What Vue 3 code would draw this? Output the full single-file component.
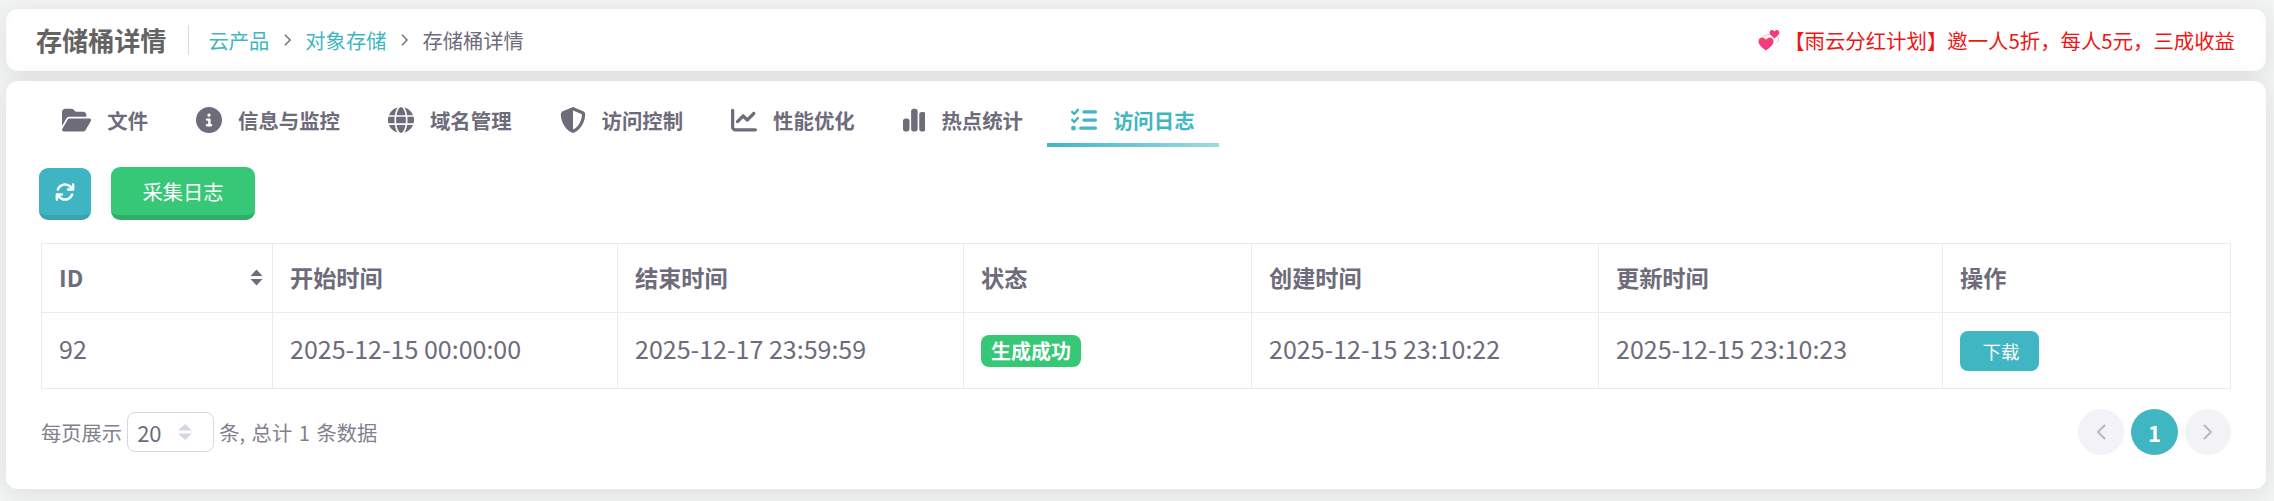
<template>
  <div class="page">
    <header class="topbar">
      <div class="topbar-left">
        <h1 class="page-title">存储桶详情</h1>
        <nav class="crumbs">
          <a class="crumb-link">云产品</a>
          <svg class="crumb-sep" viewBox="0 0 10 16"><path d="M2 2l6 6-6 6" /></svg>
          <a class="crumb-link">对象存储</a>
          <svg class="crumb-sep" viewBox="0 0 10 16"><path d="M2 2l6 6-6 6" /></svg>
          <span>存储桶详情</span>
        </nav>
      </div>
      <div class="promo">
        <svg class="promo-icon" viewBox="0 0 22 22">
          <defs>
            <linearGradient id="heartFill" x1="0" y1="0" x2="0" y2="1">
              <stop offset="0" stop-color="#f5435f" />
              <stop offset="1" stop-color="#f2359b" />
            </linearGradient>
          </defs>
          <path d="M4 8.5C7 5.5 13 4.5 17.5 6.5c4 2 4 5.5 1 7" fill="none" stroke="#f9a8c8" stroke-width="0.9" />
          <path d="M8 21.5C3.5 18 .5 15.5.5 12.4.5 10.1 2.2 8.6 4.2 8.6c1.6 0 3 .9 3.8 2.3.8-1.4 2.2-2.3 3.8-2.3 2 0 3.7 1.5 3.7 3.8 0 3.1-3 5.6-7.5 9.1z" fill="url(#heartFill)" />
          <path d="M16.5 9.5c-2.9-2.3-4.9-3.9-4.9-5.9 0-1.5 1.1-2.6 2.5-2.6 1 0 1.9.6 2.4 1.5.5-.9 1.4-1.5 2.4-1.5 1.4 0 2.5 1.1 2.5 2.6 0 2-2 3.6-4.9 5.9z" fill="url(#heartFill)" />
        </svg>
        <span>【雨云分红计划】邀一人5折，每人5元，三成收益</span>
      </div>
    </header>

    <main class="card">
      <div class="tabs">
        <div v-for="tab in tabs" :key="tab.label" class="tab" :class="{ active: tab.active }">
          <svg class="tab-icon" :style="{ width: tab.w * 26 / 512 + 'px' }" :viewBox="`0 0 ${tab.w} 512`">
            <path :d="tab.icon" />
          </svg>
          <span>{{ tab.label }}</span>
        </div>
      </div>

      <div class="actions">
        <button class="btn btn-refresh">
          <svg viewBox="0 0 512 512"><path d="M105.1 202.6c7.7-21.8 20.2-42.3 37.8-59.8c62.5-62.5 163.8-62.5 226.3 0L386.3 160H336c-17.7 0-32 14.3-32 32s14.3 32 32 32H463.5c0 0 0 0 0 0h.4c17.7 0 32-14.3 32-32V64c0-17.7-14.3-32-32-32s-32 14.3-32 32v51.2L414.4 97.6c-87.5-87.5-229.3-87.5-316.8 0C73.2 122 55.6 150.7 44.8 181.4c-5.9 16.7 2.9 34.9 19.5 40.8s34.9-2.9 40.8-19.5zM39 289.3c-5 1.5-9.8 4.2-13.7 8.2c-4 4-6.7 8.8-8.1 14c-.3 1.2-.6 2.5-.8 3.8c-.3 1.7-.4 3.4-.4 5.1V448c0 17.7 14.3 32 32 32s32-14.3 32-32V396.9l17.6 17.5 0 0c87.5 87.4 229.3 87.4 316.7 0c24.4-24.4 42.1-53.1 52.9-83.7c5.9-16.7-2.9-34.9-19.5-40.8s-34.9 2.9-40.8 19.5c-7.7 21.8-20.2 42.3-37.8 59.8c-62.5 62.5-163.8 62.5-226.3 0l-.1-.1L125.6 352H176c17.7 0 32-14.3 32-32s-14.3-32-32-32H48.4c-1.6 0-3.2 .1-4.8 .3s-3.1 .5-4.6 1z" /></svg>
        </button>
        <button class="btn btn-collect">采集日志</button>
      </div>

      <table class="log-table">
        <thead>
          <tr>
            <th class="col-id">
              <div class="th-sort">
                <span>ID</span>
                <svg viewBox="0 0 13 17"><path d="M6.5 0.5l6 6.5h-12zM.5 10h12l-6 6.5z" /></svg>
              </div>
            </th>
            <th class="col-start">开始时间</th>
            <th class="col-end">结束时间</th>
            <th class="col-status">状态</th>
            <th class="col-created">创建时间</th>
            <th class="col-updated">更新时间</th>
            <th class="col-op">操作</th>
          </tr>
        </thead>
        <tbody>
          <tr>
            <td>92</td>
            <td>2025-12-15 00:00:00</td>
            <td>2025-12-17 23:59:59</td>
            <td class="cell-box"><span class="tag-success">生成成功</span></td>
            <td>2025-12-15 23:10:22</td>
            <td>2025-12-15 23:10:23</td>
            <td class="cell-box"><button class="btn-download">下载</button></td>
          </tr>
        </tbody>
      </table>

      <div class="footer">
        <div class="page-size">
          <span>每页展示</span>
          <div class="size-select">
            <span>20</span>
            <svg viewBox="0 0 14 16"><path d="M7 0l7 6.5H0zM0 9.5h14L7 16z" /></svg>
          </div>
          <span class="total">条, 总计 1 条数据</span>
        </div>
        <div class="pager">
          <div class="pager-btn">
            <svg viewBox="0 0 12 18"><path d="M10 2L3 9l7 7" /></svg>
          </div>
          <div class="pager-btn current">1</div>
          <div class="pager-btn">
            <svg viewBox="0 0 12 18"><path d="M2 2l7 7-7 7" /></svg>
          </div>
        </div>
      </div>
    </main>
  </div>
</template>

<script setup>
// tab icons, w = viewBox width
const tabs = [
  {
    label: '文件',
    w: 576,
    icon: 'M88.7 223.8L0 375.8V96C0 60.7 28.7 32 64 32H181.5c17 0 33.3 6.7 45.3 18.7l26.5 26.5c12 12 28.3 18.7 45.3 18.7H416c35.3 0 64 28.7 64 64v32H144c-22.8 0-43.8 12.1-55.3 31.8zm27.6 16.1C122.1 230 132.6 224 144 224H544c11.5 0 22 6.1 27.7 16.1s5.7 22.2-.1 32.1l-112 192C453.9 474 443.4 480 432 480H32c-11.5 0-22-6.1-27.7-16.1s-5.7-22.2 .1-32.1l112-192z'
  },
  {
    label: '信息与监控',
    w: 512,
    icon: 'M256 512A256 256 0 1 0 256 0a256 256 0 1 0 0 512zM216 336h24V272H216c-13.3 0-24-10.7-24-24s10.7-24 24-24h48c13.3 0 24 10.7 24 24v88h8c13.3 0 24 10.7 24 24s-10.7 24-24 24H216c-13.3 0-24-10.7-24-24s10.7-24 24-24zm40-208a32 32 0 1 1 0 64 32 32 0 1 1 0-64z'
  },
  {
    label: '域名管理',
    w: 512,
    icon: 'M352 256c0 22.2-1.2 43.6-3.3 64H163.3c-2.2-20.4-3.3-41.8-3.3-64s1.2-43.6 3.3-64H348.7c2.2 20.4 3.3 41.8 3.3 64zm28.8-64H503.9c5.3 20.5 8.1 41.9 8.1 64s-2.8 43.5-8.1 64H380.8c2.1-20.6 3.2-42 3.2-64s-1.1-43.4-3.2-64zm112.6-32H376.7c-10-63.9-29.8-117.4-55.3-151.6c78.3 20.7 142 77.5 171.9 151.6zm-149.1 0H167.7c6.1-36.4 15.5-68.6 27-94.7c10.5-23.6 22.2-40.7 33.5-51.5C239.4 3.2 248.7 0 256 0s16.6 3.2 27.8 13.8c11.3 10.8 23 27.9 33.5 51.5c11.6 26 20.9 58.2 27 94.7zm-209 0H18.6C48.6 85.9 112.2 29.1 190.6 8.4C165.1 42.6 145.3 96.1 135.3 160zM8.1 192H131.2c-2.1 20.6-3.2 42-3.2 64s1.1 43.4 3.2 64H8.1C2.8 299.5 0 278.1 0 256s2.8-43.5 8.1-64zM194.7 446.6c-11.6-26-20.9-58.2-27-94.6H344.3c-6.1 36.4-15.5 68.6-27 94.6c-10.5 23.6-22.2 40.7-33.5 51.5C272.6 508.8 263.3 512 256 512s-16.6-3.2-27.8-13.8c-11.3-10.8-23-27.9-33.5-51.5zM135.3 352c10 63.9 29.8 117.4 55.3 151.6C112.2 482.9 48.6 426.1 18.6 352H135.3zm358.1 0c-30 74.1-93.6 130.9-171.9 151.6c25.5-34.2 45.2-87.7 55.3-151.6H493.4z'
  },
  {
    label: '访问控制',
    w: 512,
    icon: 'M256 0c4.6 0 9.2 1 13.4 2.9L457.7 82.8c22 9.3 38.4 31 38.3 57.2c-.5 99.2-41.3 280.7-213.6 363.2c-16.7 8-36.1 8-52.8 0C57.3 420.7 16.5 239.2 16 140c-.1-26.2 16.3-47.9 38.3-57.2L242.7 2.9C246.8 1 251.4 0 256 0zm0 66.8V444.8C394 378 431.1 230.1 432 141.4L256 66.8l0 0z'
  },
  {
    label: '性能优化',
    w: 512,
    icon: 'M64 64c0-17.7-14.3-32-32-32S0 46.3 0 64V400c0 44.2 35.8 80 80 80H480c17.7 0 32-14.3 32-32s-14.3-32-32-32H80c-8.8 0-16-7.2-16-16V64zm406.6 86.6c12.5-12.5 12.5-32.8 0-45.3s-32.8-12.5-45.3 0L320 210.7l-57.4-57.4c-12.5-12.5-32.8-12.5-45.3 0l-112 112c-12.5 12.5-12.5 32.8 0 45.3s32.8 12.5 45.3 0L240 221.3l57.4 57.4c12.5 12.5 32.8 12.5 45.3 0l128-128z'
  },
  {
    label: '热点统计',
    w: 448,
    icon: 'M160 80c0-26.5 21.5-48 48-48h32c26.5 0 48 21.5 48 48V432c0 26.5-21.5 48-48 48H208c-26.5 0-48-21.5-48-48V80zM0 272c0-26.5 21.5-48 48-48H80c26.5 0 48 21.5 48 48V432c0 26.5-21.5 48-48 48H48c-26.5 0-48-21.5-48-48V272zM368 96h32c26.5 0 48 21.5 48 48V432c0 26.5-21.5 48-48 48H368c-26.5 0-48-21.5-48-48V144c0-26.5 21.5-48 48-48z'
  },
  {
    label: '访问日志',
    w: 512,
    active: true,
    icon: 'M152.1 38.2c9.9 8.9 10.7 24 1.8 33.9l-72 80c-4.4 4.9-10.6 7.8-17.2 7.9s-12.9-2.4-17.6-7L7 113C-2.3 103.6-2.3 88.4 7 79s24.6-9.4 33.9 0l22.1 22.1 55.1-61.2c8.9-9.9 24-10.7 33.9-1.8zm0 160c9.9 8.9 10.7 24 1.8 33.9l-72 80c-4.4 4.9-10.6 7.8-17.2 7.9s-12.9-2.4-17.6-7L7 273c-9.4-9.4-9.4-24.6 0-33.9s24.6-9.4 33.9 0l22.1 22.1 55.1-61.2c8.9-9.9 24-10.7 33.9-1.8zM224 96c0-17.7 14.3-32 32-32H480c17.7 0 32 14.3 32 32s-14.3 32-32 32H256c-17.7 0-32-14.3-32-32zm0 160c0-17.7 14.3-32 32-32H480c17.7 0 32 14.3 32 32s-14.3 32-32 32H256c-17.7 0-32-14.3-32-32zM160 416c0-17.7 14.3-32 32-32H480c17.7 0 32 14.3 32 32s-14.3 32-32 32H192c-17.7 0-32-14.3-32-32zM48 368a48 48 0 1 1 0 96 48 48 0 1 1 0-96z'
  }
]
</script>

<style>
html,
body {
  margin: 0;
  background: #f3f4f4;
}
</style>

<style scoped>
.page {
  box-sizing: border-box;
  height: 501px;
  padding: 9px 8px 0 6px;
  overflow: hidden;
  font-family: "Noto Sans CJK SC", "Noto Sans", sans-serif;
  color: #6e6b7b;
}

.topbar {
  height: 62px;
  display: flex;
  align-items: center;
  justify-content: space-between;
  padding: 0 31px 0 30px;
  background: #fff;
  border-radius: 12px;
  box-shadow: 0 4px 24px rgba(34, 41, 47, 0.1), inset 0 0 12px rgba(0, 0, 0, 0.02);
}

.topbar-left {
  display: flex;
  align-items: center;
}

.page-title {
  margin: 0;
  padding-right: 22px;
  border-right: 1px solid #d6dce1;
  font-size: 26.1px;
  line-height: 30px;
  font-weight: 700;
  color: #636363;
}

.crumbs {
  display: flex;
  align-items: center;
  padding-left: 19px;
  font-size: 20.3px;
  color: #6e6b7b;
}

.crumb-link {
  color: #40b6c2;
}

.crumb-sep {
  width: 9px;
  height: 14px;
  margin: 0 13.5px;
  fill: none;
  stroke: #6e6b7b;
  stroke-width: 1.6;
}

.promo {
  display: flex;
  align-items: center;
  gap: 4px;
  font-size: 20.4px;
  color: #f01414;
}

.promo-icon {
  width: 22px;
  height: 22px;
}

.card {
  margin-top: 10px;
  height: 408px;
  box-sizing: border-box;
  padding: 12px 35px 0 33px;
  background: #fff;
  border-radius: 12px;
  box-shadow: 0 4px 24px rgba(34, 41, 47, 0.1);
}

.tabs {
  display: flex;
  margin-left: -1px;
}

.tab {
  height: 54px;
  box-sizing: border-box;
  display: flex;
  align-items: center;
  gap: 16px;
  padding: 0 24px;
  font-size: 20.4px;
  font-weight: 700;
  color: #6e6b7b;
  position: relative;
}

.tab-icon {
  height: 26px;
  fill: currentColor;
  flex: none;
}

.tab.active {
  color: #40b6c2;
}

.tab.active::after {
  content: "";
  position: absolute;
  left: 0;
  right: 0;
  bottom: 0;
  height: 4px;
  background: linear-gradient(90deg, #40b6c2, rgba(64, 182, 194, 0.5));
}

.actions {
  display: flex;
  align-items: flex-end;
  gap: 20px;
  margin-top: 20px;
}

.btn {
  border: none;
  box-sizing: border-box;
  border-radius: 9px;
  color: #fff;
  font-family: inherit;
  padding: 0;
  display: flex;
  align-items: center;
  justify-content: center;
}

.btn-refresh {
  width: 52px;
  height: 52px;
  background: #3fb5c3;
  border-bottom: 5px solid #3aa3ae;
}

.btn-refresh svg {
  width: 20px;
  height: 20px;
  fill: #fff;
}

.btn-collect {
  width: 144px;
  height: 53px;
  background: #36c777;
  border-bottom: 5px solid #31ad6a;
  font-size: 20.3px;
}

.log-table {
  width: 2190px;
  margin: 23px 0 0 2px;
  border-collapse: collapse;
  table-layout: fixed;
}

.log-table th,
.log-table td {
  border: 1px solid #ebe9f1;
  padding: 0 17px;
  text-align: left;
}

.log-table th {
  height: 69px;
  box-sizing: border-box;
  padding-bottom: 2px;
  font-size: 23.2px;
  font-weight: 700;
  color: #6e6b7b;
}

.log-table td {
  height: 76px;
  box-sizing: border-box;
  padding-bottom: 5px;
  font-size: 25px;
  color: #6e6b7b;
}

.log-table td.cell-box {
  padding-bottom: 0;
}

.col-id {
  width: 231px;
}

.col-start {
  width: 345px;
}

.col-end {
  width: 346px;
}

.col-status {
  width: 288px;
}

.col-created {
  width: 347px;
}

.col-updated {
  width: 344px;
}

.th-sort {
  display: flex;
  align-items: center;
  justify-content: space-between;
  margin-right: -8px;
}

.th-sort svg {
  width: 13px;
  height: 17px;
  fill: #6e6b7b;
}

.tag-success {
  display: block;
  width: fit-content;
  height: 32px;
  line-height: 32px;
  padding: 0 10px;
  border-radius: 8px;
  background: #36c777;
  color: #fff;
  font-size: 20px;
  font-weight: 700;
}

.btn-download {
  display: block;
  width: 79px;
  height: 40px;
  border: none;
  padding: 0 0 0 3px;
  border-radius: 8px;
  background: #40b6c2;
  color: #fff;
  font-family: inherit;
  font-size: 18.5px;
}

.footer {
  display: flex;
  align-items: center;
  justify-content: space-between;
  margin: 20px 0 0 2px;
  width: 2190px;
}

.page-size {
  display: flex;
  align-items: center;
  gap: 5px;
  font-size: 20.3px;
  color: #82808d;
}

.total {
  word-spacing: 2px;
}

.size-select {
  box-sizing: border-box;
  width: 87px;
  height: 40px;
  display: flex;
  align-items: center;
  justify-content: space-between;
  padding: 0 21px 0 9px;
  border: 1px solid #d8d6de;
  border-radius: 8px;
  font-size: 22px;
  color: #6e6b7b;
}

.size-select svg {
  width: 14px;
  height: 16px;
  fill: #d8d6de;
}

.pager {
  display: flex;
  align-items: center;
  gap: 7px;
}

.pager-btn {
  width: 46px;
  height: 46px;
  border-radius: 50%;
  background: #f3f2f7;
  display: flex;
  align-items: center;
  justify-content: center;
}

.pager-btn svg {
  width: 12px;
  height: 18px;
  fill: none;
  stroke: #b9b7c4;
  stroke-width: 2;
}

.pager-btn.current {
  width: 47px;
  background: #40b6c2;
  color: #fff;
  font-size: 22px;
  font-weight: 700;
}
</style>
